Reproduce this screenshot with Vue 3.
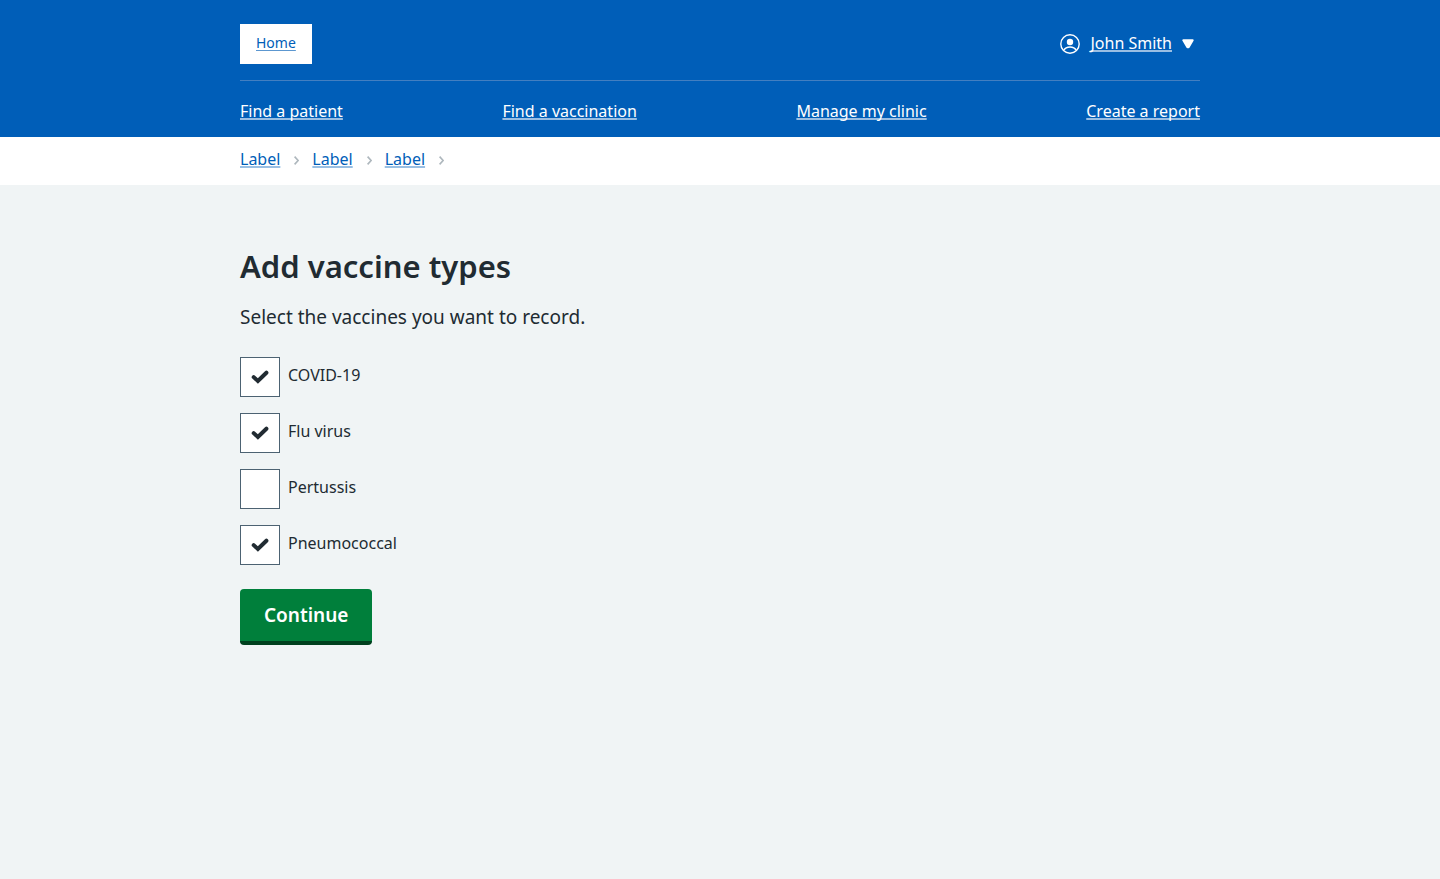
<script setup>
import { ref } from 'vue'

const navLinks = ['Find a patient', 'Find a vaccination', 'Manage my clinic', 'Create a report']
const crumbs = ['Label', 'Label', 'Label']
const vaccines = ref([
  { id: 'covid', name: 'COVID-19', checked: true },
  { id: 'flu', name: 'Flu virus', checked: true },
  { id: 'pertussis', name: 'Pertussis', checked: false },
  { id: 'pneumococcal', name: 'Pneumococcal', checked: true },
])
</script>

<template>
  <div class="page">
    <header class="header">
      <div class="container">
        <div class="top">
          <a href="#" class="home">Home</a>
          <a href="#" class="account">
            <svg class="user" width="20" height="20" viewBox="0 0 20 20" fill="none" aria-hidden="true">
              <circle cx="10" cy="10" r="9.2" stroke="#fff" stroke-width="1.4" />
              <circle cx="10" cy="8" r="3.2" fill="#fff" />
              <path d="M3.800 16.300C5 14 7.200 13 10 13s5 1 6.200 3.300" stroke="#fff" stroke-width="1.400" />
            </svg>
            <span class="name">John Smith</span>
            <svg class="caret" width="12" height="10" viewBox="0 0 12 10" aria-hidden="true">
              <path d="M1.300 1.300h9.400L6.600 8.200H5.400z" fill="#fff" stroke="#fff" stroke-width="2" stroke-linejoin="round" />
            </svg>
          </a>
        </div>
        <nav class="nav" aria-label="Main">
          <a v-for="link in navLinks" :key="link" href="#">{{ link }}</a>
        </nav>
      </div>
    </header>

    <nav class="crumbs" aria-label="Breadcrumb">
      <ol class="container trail">
        <li v-for="(crumb, i) in crumbs" :key="i">
          <a href="#">{{ crumb }}</a>
          <svg width="5" height="10" viewBox="0 0 5 10" fill="none" aria-hidden="true">
            <path d="M.6 1.600L4.100 5.500.6 9.400" stroke="#aeb7bd" stroke-width="1.600" />
          </svg>
        </li>
      </ol>
    </nav>

    <main class="container main">
      <h1>Add vaccine types</h1>
      <form @submit.prevent>
        <fieldset>
          <legend>Select the vaccines you want to record.</legend>
          <div class="options">
            <div v-for="v in vaccines" :key="v.id" class="option">
              <span class="box">
                <input :id="v.id" v-model="v.checked" type="checkbox" />
                <svg v-if="v.checked" width="18" height="14" viewBox="0 0 18 14" fill="none" aria-hidden="true">
                  <path d="M2.700 7.100l4.200 3.900L15.400 2.700" stroke="#212b32" stroke-width="4" stroke-linecap="round" />
                </svg>
              </span>
              <label :for="v.id">{{ v.name }}</label>
            </div>
          </div>
        </fieldset>
        <button type="submit">Continue</button>
      </form>
    </main>
  </div>
</template>

<style>
html,
body {
  margin: 0;
  background: #f0f4f5;
}
</style>

<style scoped>
.page {
  min-height: 100vh;
  background: #f0f4f5;
  color: #212b32;
  font-family: "Noto Sans", "Open Sans", sans-serif;
  font-size: 16px;
  line-height: 24px;
}
.container {
  box-sizing: border-box;
  width: 100%;
  max-width: 960px;
  margin: 0 auto;
}
.header {
  background: #005eb8;
}
.top {
  display: flex;
  justify-content: space-between;
  align-items: center;
  padding: 24px 0 16px;
  border-bottom: 1px solid #437fc1;
}
a {
  color: #fff;
  text-decoration: underline;
  text-decoration-color: rgba(255, 255, 255, 0.6);
  text-decoration-thickness: 2px;
  text-decoration-skip-ink: none;
  text-underline-offset: 1px;
}
.home {
  padding: 7px 16px 9px;
  background: #fff;
  color: #005eb8;
  font-size: 14px;
  text-decoration-color: #5c97d0;
  text-decoration-thickness: 1px;
  text-underline-offset: 2px;
}
.account {
  display: flex;
  align-items: center;
  padding-right: 6px;
  text-decoration: none;
}
.name {
  margin: 0 10px;
  padding-bottom: 3px;
  text-decoration: underline;
  text-decoration-color: rgba(255, 255, 255, 0.6);
  text-decoration-thickness: 2px;
  text-decoration-skip-ink: none;
  text-underline-offset: 1px;
}
.nav {
  display: flex;
  justify-content: space-between;
  padding: 18px 0 14px;
}
.crumbs {
  background: #fff;
}
.trail {
  display: flex;
  padding: 10px 0 14px;
  list-style: none;
}
.trail li {
  display: flex;
  align-items: center;
  gap: 14px;
  margin-right: 13px;
}
.trail svg {
  margin-top: 2px;
}
.trail a {
  color: #005eb8;
  text-decoration-color: #99bfe3;
}
.main {
  padding: 61px 0;
}
h1 {
  margin: 0 0 17px;
  font-size: 31px;
  line-height: 40px;
  font-weight: 600;
}
fieldset {
  margin: 0;
  padding: 0;
  border: 0;
}
legend {
  padding: 0;
  font-size: 19px;
  line-height: 28px;
}
.options {
  display: grid;
  gap: 16px;
  padding: 26px 0 24px;
}
.option {
  display: flex;
  gap: 8px;
}
.box {
  display: grid;
  place-items: center;
}
.box input,
.box svg {
  grid-area: 1 / 1;
}
.box svg {
  pointer-events: none;
}
input {
  appearance: none;
  box-sizing: border-box;
  width: 40px;
  height: 40px;
  margin: 0;
  border: 1px solid #4c6272;
  background: #fff;
}
label {
  padding: 6px 0 10px;
}
button {
  display: block;
  padding: 12px 24px;
  border: 0;
  border-bottom: 4px solid #00401e;
  border-radius: 4px;
  background: #007f3b;
  color: #fff;
  font-family: inherit;
  font-size: 19px;
  font-weight: 600;
  line-height: 28px;
}
</style>
